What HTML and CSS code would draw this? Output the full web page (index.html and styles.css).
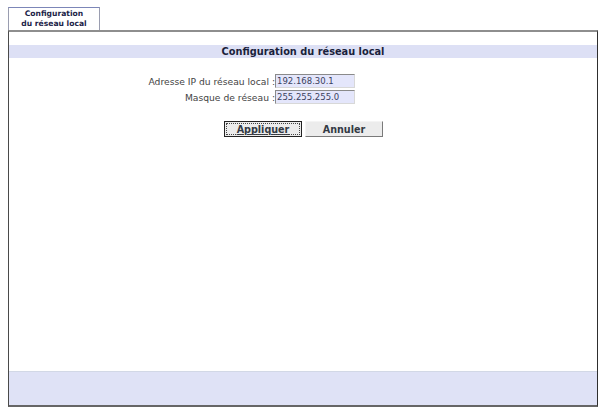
FILE: index.html
```html
<!DOCTYPE html>
<html lang="fr">
<head>
<meta charset="utf-8">
<title>Configuration du réseau local</title>
<link rel="stylesheet" href="styles.css">
</head>
<body>
<div class="tabs">
  <div class="tab">Configuration<br>du réseau local</div>
</div>
<div class="panel">
  <div class="content">
    <div class="title">Configuration du réseau local</div>
    <div class="form">
      <div class="row">
        <label class="label">Adresse IP du réseau local :</label>
        <input class="field" type="text" value="192.168.30.1">
      </div>
      <div class="row">
        <label class="label">Masque de réseau :</label>
        <input class="field" type="text" value="255.255.255.0">
      </div>
    </div>
    <div class="buttons">
      <button class="btn btn-focus">Appliquer</button>
      <button class="btn">Annuler</button>
    </div>
  </div>
  <div class="footer"></div>
</div>
</body>
</html>
```
FILE: styles.css
```css
html, body {
  margin: 0;
  padding: 0;
  background: #ffffff;
  font-family: "DejaVu Sans", Verdana, sans-serif;
  height: 409px;
  overflow: hidden;
}
.tabs {
  display: flex;
  padding: 7px 0 0 8px;
  height: 23px;
}
.tab {
  width: 92px;
  height: 23px;
  box-sizing: border-box;
  border: 1px solid #9a9db0;
  border-top-color: #7c86b8;
  border-bottom: none;
  font-size: 7.6px;
  font-weight: bold;
  line-height: 10px;
  color: #1c2448;
  text-align: center;
  padding-top: 1px;
}
.panel {
  margin: 0 3px 0 8px;
  height: 377px;
  box-sizing: border-box;
  border-top: 2px solid #8e8e8e;
  border-left: 1px solid #4a4a4a;
  border-right: 1px solid #2e2e2e;
  border-bottom: 2px solid #666666;
  display: flex;
  flex-direction: column;
}
.content {
  flex: 1;
  padding-top: 13px;
}
.title {
  background: #dde0f5;
  height: 13px;
  line-height: 13px;
  text-align: center;
  font-size: 9.8px;
  font-weight: bold;
  color: #1a1f3c;
}
.form {
  padding-top: 16px;
  display: flex;
  flex-direction: column;
  gap: 2px;
}
.row {
  display: flex;
  align-items: center;
  height: 14px;
}
.label {
  width: 266px;
  text-align: right;
  font-size: 9.2px;
  color: #444444;
}
.field {
  width: 80px;
  height: 14px;
  box-sizing: border-box;
  margin: 0;
  padding: 0 1px;
  border: 1px solid #8a8a8a;
  border-right-color: #d8d8d8;
  border-bottom-color: #d8d8d8;
  background: #e4e6fb;
  font-family: "DejaVu Sans", Verdana, sans-serif;
  font-size: 8.5px;
  color: #3a3f60;
}
.buttons {
  display: flex;
  gap: 3px;
  padding: 17px 0 0 215px;
}
.btn {
  width: 78px;
  height: 16px;
  margin: 0;
  padding: 0;
  box-sizing: border-box;
  background: #ececec;
  border: 1px solid #a0a0a0;
  border-top-color: #f4f4f4;
  border-left-color: #f4f4f4;
  border-right-color: #7a7a7a;
  border-bottom-color: #7a7a7a;
  font-family: "DejaVu Sans", Verdana, sans-serif;
  font-size: 9.6px;
  font-weight: bold;
  color: #333a44;
}
.btn-focus {
  border: 1px solid #222;
  outline: 1px dotted #444;
  outline-offset: -3px;
  text-decoration: underline;
}
.footer {
  height: 33px;
  background: #dfe2f6;
  border-top: 1px solid #d2d8e6;
}
```
